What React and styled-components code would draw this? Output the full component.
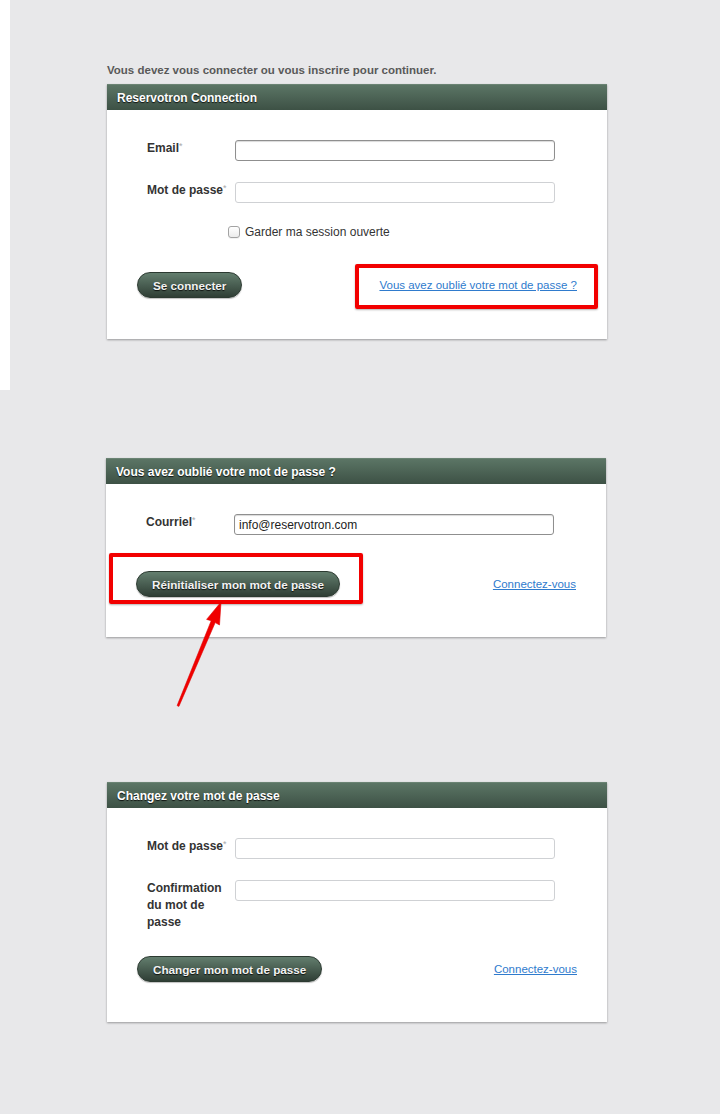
import styled, { createGlobalStyle } from "styled-components";

const GlobalStyle = createGlobalStyle`
  html, body {
    margin: 0;
    padding: 0;
    background: #e8e8ea;
    font-family: "Liberation Sans", Arial, sans-serif;
  }
`;

const Page = styled.div`
  width: 720px;
  min-height: 1114px;
  background: #e8e8ea;
`;

const Shot = styled.div`
  position: relative;
  box-sizing: border-box;
  padding-top: ${(p) => p.$top}px;
  padding-left: ${(p) => p.$left}px;
  height: ${(p) => (p.$height ? `${p.$height}px` : "auto")};
  border-left: ${(p) => (p.$strip ? "10px solid #fff" : "none")};
`;

const Intro = styled.p`
  margin: 0 0 7px;
  font-size: 11.5px;
  line-height: 14px;
  font-weight: bold;
  color: #595959;
`;

const Card = styled.div`
  width: 500px;
  background: #fff;
  box-shadow: 0 1px 2px rgba(0, 0, 0, 0.35);
`;

const CardHeader = styled.div`
  height: 26px;
  box-sizing: border-box;
  padding: 0 10px;
  display: flex;
  align-items: center;
  background: linear-gradient(#5b7565, #3d5145);
  border-top: 1px solid #6a8373;
  color: #fff;
  font-size: 12px;
  font-weight: bold;
  text-shadow: 0 1px 1px rgba(0, 0, 0, 0.8);
`;

const CardBody = styled.div`
  padding: 30px 0 ${(p) => p.$bottom || 40}px;
`;

const Rows = styled.div`
  display: flex;
  flex-direction: column;
  gap: 21px;
  padding-left: 40px;
`;

const Row = styled.div`
  display: flex;
  align-items: flex-start;
`;

const Label = styled.label`
  width: 80px;
  margin-right: 8px;
  font-size: 12px;
  line-height: 17px;
  font-weight: bold;
  color: #333;
`;

const Required = styled.span`
  font-size: 9px;
  font-weight: normal;
  color: #aaa;
  vertical-align: top;
  line-height: 12px;
`;

const Input = styled.input`
  box-sizing: border-box;
  width: 320px;
  height: 21px;
  padding: 0 4px;
  border: 1px solid ${(p) => (p.$focused ? "#8f8f8f" : "#cfd1d4")};
  border-radius: 3px;
  box-shadow: ${(p) => (p.$focused ? "inset 0 1px 1px rgba(0,0,0,0.15)" : "none")};
  background: #fff;
  font-family: "Liberation Sans", Arial, sans-serif;
  font-size: 12px;
  color: #222;
  outline: none;
`;

const CheckRow = styled.label`
  display: flex;
  align-items: center;
  gap: 5px;
  margin-top: 20px;
  padding-left: 121px;
  height: 17px;
  font-size: 12px;
  color: #333;
`;

const Checkbox = styled.input`
  appearance: none;
  margin: 0;
  width: 12px;
  height: 12px;
  border: 1px solid #a3a3a3;
  border-radius: 3px;
  background: linear-gradient(#fff, #ececec);
  box-shadow: 0 1px 0 rgba(0, 0, 0, 0.05);
`;

const Footer = styled.div`
  display: flex;
  align-items: center;
  justify-content: space-between;
  margin-top: ${(p) => p.$top}px;
  padding: 0 30px;
`;

const Button = styled.button`
  height: 26px;
  padding: 0 15px;
  border: 1px solid #2c3a31;
  border-radius: 13px;
  background: linear-gradient(#637e6e, #2f3e35);
  box-shadow: 0 1px 1px rgba(0, 0, 0, 0.25);
  color: #f2f2f2;
  font-family: "Liberation Sans", Arial, sans-serif;
  font-size: 11.7px;
  font-weight: bold;
  text-shadow: 0 1px 1px rgba(0, 0, 0, 0.8);
  cursor: pointer;
`;

const TextLink = styled.a`
  font-size: 11.5px;
  line-height: 14px;
  color: #2f7bcd;
  text-decoration: underline;
  cursor: pointer;
`;

// red annotation frame drawn over the screenshot
const Highlight = styled.span`
  position: relative;
  display: inline-flex;

  &::after {
    content: "";
    position: absolute;
    top: -${(p) => p.$t}px;
    right: -${(p) => p.$r}px;
    bottom: -${(p) => p.$b}px;
    left: -${(p) => p.$l}px;
    border: 4px solid #f20000;
    border-radius: 2px;
    box-shadow: 0 1px 2px rgba(0, 0, 0, 0.3);
    pointer-events: none;
  }
`;

const Arrow = styled.svg`
  position: absolute;
  left: 170px;
  top: 208px;
  width: 60px;
  height: 115px;
  overflow: visible;
`;

const Field = ({ label, required, value, focused }) => (
  <Row>
    <Label>
      {label}
      {required && <Required>*</Required>}
    </Label>
    <Input defaultValue={value} $focused={focused} />
  </Row>
);

export default function App() {
  return (
    <Page>
      <GlobalStyle />

      <Shot $strip $top={63} $left={97} $height={390}>
        <Intro>Vous devez vous connecter ou vous inscrire pour continuer.</Intro>
        <Card>
          <CardHeader>Reservotron Connection</CardHeader>
          <CardBody $bottom={41}>
            <Rows>
              <Field label="Email" required focused />
              <Field label="Mot de passe" required />
            </Rows>
            <CheckRow>
              <Checkbox type="checkbox" />
              Garder ma session ouverte
            </CheckRow>
            <Footer $top={32}>
              <Button>Se connecter</Button>
              <Highlight $t={14} $r={21} $b={17} $l={24}>
                <TextLink>Vous avez oublié votre mot de passe ?</TextLink>
              </Highlight>
            </Footer>
          </CardBody>
        </Card>
      </Shot>

      <Shot $top={68} $left={106}>
        <Card>
          <CardHeader>Vous avez oublié votre mot de passe ?</CardHeader>
          <CardBody>
            <Rows>
              <Field label="Courriel" required value="info@reservotron.com" focused />
            </Rows>
            <Footer $top={36}>
              <Highlight $t={18} $r={23} $b={7} $l={27}>
                <Button>Réinitialiser mon mot de passe</Button>
              </Highlight>
              <TextLink>Connectez-vous</TextLink>
            </Footer>
          </CardBody>
        </Card>
        <Arrow viewBox="0 0 60 115">
          <path
            d="M51 4 L49.5 27 L45.2 24.6 L8.9 108.4 L7.1 107.6 L41.2 22.7 L36.6 21.4 Z"
            fill="#f00000"
            stroke="#e00000"
            strokeWidth="0.6"
            strokeLinejoin="round"
          />
        </Arrow>
      </Shot>

      <Shot $top={145} $left={107}>
        <Card>
          <CardHeader>Changez votre mot de passe</CardHeader>
          <CardBody>
            <Rows>
              <Field label="Mot de passe" required />
              <Field label="Confirmation du mot de passe" />
            </Rows>
            <Footer $top={25}>
              <Button>Changer mon mot de passe</Button>
              <TextLink>Connectez-vous</TextLink>
            </Footer>
          </CardBody>
        </Card>
      </Shot>
    </Page>
  );
}
